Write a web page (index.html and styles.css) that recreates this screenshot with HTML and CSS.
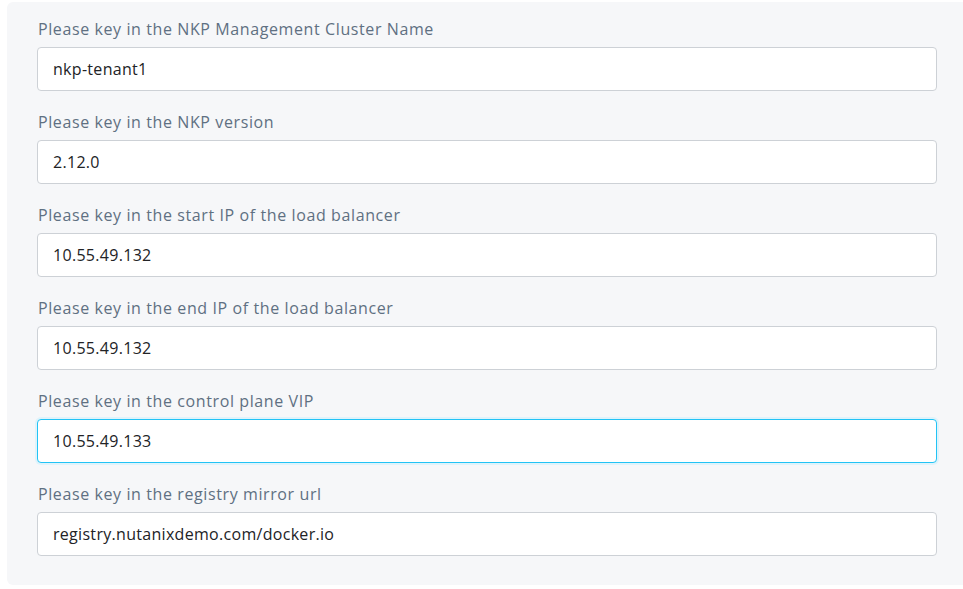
FILE: index.html
```html
<!DOCTYPE html>
<html>
<head>
<meta charset="utf-8">
<link rel="stylesheet" href="styles.css">
</head>
<body>
<div class="panel">
  <div class="field">
    <label class="label">Please key in the NKP Management Cluster Name</label>
    <div class="input">nkp-tenant1</div>
  </div>
  <div class="field">
    <label class="label">Please key in the NKP version</label>
    <div class="input">2.12.0</div>
  </div>
  <div class="field">
    <label class="label">Please key in the start IP of the load balancer</label>
    <div class="input">10.55.49.132</div>
  </div>
  <div class="field">
    <label class="label">Please key in the end IP of the load balancer</label>
    <div class="input">10.55.49.132</div>
  </div>
  <div class="field">
    <label class="label">Please key in the control plane VIP</label>
    <div class="input focused">10.55.49.133</div>
  </div>
  <div class="field">
    <label class="label">Please key in the registry mirror url</label>
    <div class="input">registry.nutanixdemo.com/docker.io</div>
  </div>
</div>
</body>
</html>
```
FILE: styles.css
```css
html, body {
  margin: 0;
  padding: 0;
  background: #ffffff;
  overflow: hidden;
  font-family: "Open Sans", Lato, sans-serif;
}
.panel {
  margin: 2px -12px 0 7px;
  background: #f6f7f9;
  border-radius: 6px;
  padding: 15px 0 29px 30px;
  display: flex;
  flex-direction: column;
  gap: 19px;
}
.field {
  display: flex;
  flex-direction: column;
  gap: 6px;
}
.label {
  font-size: 16px;
  line-height: 24px;
  color: #5f7082;
  padding-left: 1px;
  letter-spacing: 0.6px;
}
.input {
  box-sizing: border-box;
  width: 900px;
  height: 44px;
  background: #ffffff;
  border: 1px solid #cdd1d6;
  border-radius: 4px;
  padding: 0 15px;
  display: flex;
  align-items: center;
  font-size: 16px;
  letter-spacing: 0.3px;
  color: #222326;
}
.input.focused {
  border-color: #22c3f5;
  box-shadow: 0 0 0 2px #dff3fb;
}
```
